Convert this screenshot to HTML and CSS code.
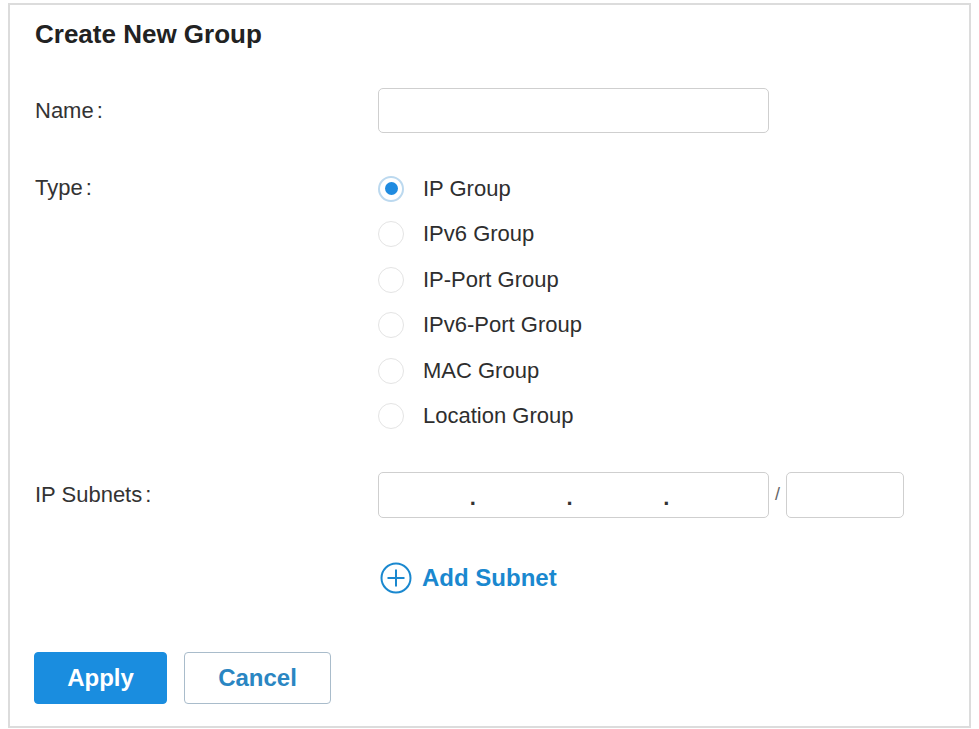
FILE: index.html
```html
<!DOCTYPE html>
<html>
<head>
<meta charset="utf-8">
<link rel="stylesheet" href="styles.css">
</head>
<body>
<div class="panel">
  <h1 class="title">Create New Group</h1>

  <div class="row row-name">
    <div class="label">Name<span class="colon">:</span></div>
    <div class="control"><div class="input input-name"></div></div>
  </div>

  <div class="row row-type">
    <div class="label label-top">Type<span class="colon">:</span></div>
    <div class="control radios">
      <div class="radio-item"><span class="radio checked"><span class="dot"></span></span><span class="radio-text">IP Group</span></div>
      <div class="radio-item"><span class="radio"></span><span class="radio-text">IPv6 Group</span></div>
      <div class="radio-item"><span class="radio"></span><span class="radio-text">IP-Port Group</span></div>
      <div class="radio-item"><span class="radio"></span><span class="radio-text">IPv6-Port Group</span></div>
      <div class="radio-item"><span class="radio"></span><span class="radio-text">MAC Group</span></div>
      <div class="radio-item"><span class="radio"></span><span class="radio-text">Location Group</span></div>
    </div>
  </div>

  <div class="row row-subnet">
    <div class="label">IP Subnets<span class="colon">:</span></div>
    <div class="control subnet">
      <div class="input input-ip">
        <span class="seg"></span><span class="ipdot">.</span>
        <span class="seg"></span><span class="ipdot">.</span>
        <span class="seg"></span><span class="ipdot">.</span>
        <span class="seg"></span>
      </div>
      <span class="slash">/</span>
      <div class="input input-mask"></div>
    </div>
  </div>

  <div class="row row-add">
    <div class="label"></div>
    <div class="control add">
      <svg class="add-icon" width="32" height="32" viewBox="0 0 32 32">
        <circle cx="16" cy="16" r="14.5" fill="none" stroke="#1a88cf" stroke-width="2"/>
        <path d="M16 7.5V24.5M7.5 16H24.5" stroke="#1a88cf" stroke-width="2" fill="none"/>
      </svg>
      <span class="add-text">Add Subnet</span>
    </div>
  </div>

  <div class="buttons">
    <button class="btn btn-apply">Apply</button>
    <button class="btn btn-cancel">Cancel</button>
  </div>
</div>
</body>
</html>
```

FILE: styles.css
```css
html, body {
  margin: 0;
  padding: 0;
  background: #ffffff;
}

body {
  font-family: "Liberation Sans", Arial, sans-serif;
  color: #333333;
}

.panel {
  box-sizing: border-box;
  margin: 3px 0 0 8px;
  width: 963px;
  height: 725px;
  border: 2px solid #dcdcdc;
  padding: 14px 0 0 25px;
}

.title {
  margin: 0;
  font-size: 26px;
  line-height: 30px;
  font-weight: bold;
  color: #222222;
}

.row {
  display: flex;
  align-items: center;
}

.label {
  width: 343px;
  flex: none;
  font-size: 22px;
  line-height: 26px;
  color: #333333;
}

.colon {
  margin-left: 3px;
}

.row-name {
  margin-top: 39px;
}

.input {
  box-sizing: border-box;
  border: 1.5px solid #cfcfcf;
  border-radius: 5px;
  background: #fff;
}

.input-name {
  width: 391px;
  height: 45px;
}

.row-type {
  margin-top: 33px;
  align-items: flex-start;
}

.label-top {
  margin-top: 9px;
}

.radios {
  display: flex;
  flex-direction: column;
}

.radio-item {
  height: 45.5px;
  display: flex;
  align-items: center;
}

.radio {
  box-sizing: border-box;
  width: 26px;
  height: 26px;
  border-radius: 50%;
  border: 1.5px solid #e4e4e4;
  display: flex;
  align-items: center;
  justify-content: center;
  flex: none;
}

.radio.checked {
  border: 2.5px solid #bcd9ef;
}

.dot {
  width: 13px;
  height: 13px;
  border-radius: 50%;
  background: #1f8be0;
}

.radio-text {
  margin-left: 19px;
  font-size: 22px;
  color: #2e2e2e;
}

.row-subnet {
  margin-top: 33px;
}

.subnet {
  display: flex;
  align-items: center;
}

.input-ip {
  width: 391px;
  height: 46px;
  display: flex;
  align-items: center;
  padding-top: 6px;
  padding-right: 8px;
}

.seg {
  flex: 1;
}

.ipdot {
  font-size: 22px;
  font-weight: bold;
  color: #333;
  line-height: 20px;
}

.slash {
  font-size: 18px;
  color: #666;
  margin: 0 6px 0 6px;
  transform: translateY(-1px);
}

.input-mask {
  width: 118px;
  height: 46px;
}

.row-add {
  margin-top: 44px;
}

.add {
  display: flex;
  align-items: center;
  height: 32px;
}

.add-icon {
  margin-left: 2px;
  display: block;
}

.add-text {
  margin-left: 10px;
  font-size: 24px;
  font-weight: bold;
  color: #1a88cf;
}

.buttons {
  display: flex;
  gap: 17px;
  margin-top: 58px;
  margin-left: -1px;
}

.btn {
  font-family: "Liberation Sans", Arial, sans-serif;
  font-size: 24px;
  font-weight: bold;
  height: 52px;
  border-radius: 4px;
  box-sizing: border-box;
  cursor: pointer;
}

.btn-apply {
  width: 133px;
  background: #1a8ddf;
  border: 1px solid #1a8ddf;
  color: #ffffff;
}

.btn-cancel {
  width: 147px;
  background: #ffffff;
  border: 1.5px solid #a9bccb;
  color: #2a86c2;
}
```
